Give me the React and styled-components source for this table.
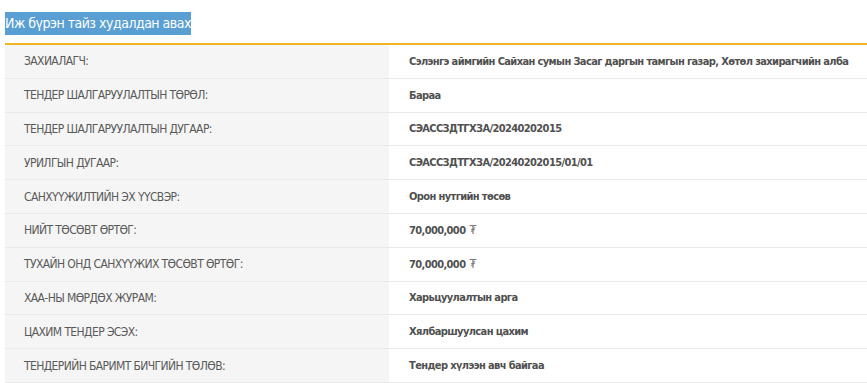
import React from "react";
import styled, { createGlobalStyle } from "styled-components";

const rows = [
  ["ЗАХИАЛАГЧ:", "Сэлэнгэ аймгийн Сайхан сумын Засаг даргын тамгын газар, Хөтөл захирагчийн алба"],
  ["ТЕНДЕР ШАЛГАРУУЛАЛТЫН ТӨРӨЛ:", "Бараа"],
  ["ТЕНДЕР ШАЛГАРУУЛАЛТЫН ДУГААР:", "СЭАССЗДТГХЗА/20240202015"],
  ["УРИЛГЫН ДУГААР:", "СЭАССЗДТГХЗА/20240202015/01/01"],
  ["САНХҮҮЖИЛТИЙН ЭХ ҮҮСВЭР:", "Орон нутгийн төсөв"],
  ["НИЙТ ТӨСӨВТ ӨРТӨГ:", "70,000,000", true],
  ["ТУХАЙН ОНД САНХҮҮЖИХ ТӨСӨВТ ӨРТӨГ:", "70,000,000", true],
  ["ХАА-НЫ МӨРДӨХ ЖУРАМ:", "Харьцуулалтын арга"],
  ["ЦАХИМ ТЕНДЕР ЭСЭХ:", "Хялбаршуулсан цахим"],
  ["ТЕНДЕРИЙН БАРИМТ БИЧГИЙН ТӨЛӨВ:", "Тендер хүлээн авч байгаа"],
];

const GlobalStyle = createGlobalStyle`
  body {
    margin: 0;
    background: #fff;
    font-family: "DejaVu Sans Condensed", "Liberation Sans", sans-serif;
  }
`;

const Page = styled.div`
  padding: 12px 0 0 5px;
`;

const Title = styled.h3`
  margin: 0 0 8px;
  font-size: 14px;
  font-weight: normal;
  line-height: 23px;
  letter-spacing: -0.5px;
`;

const Selected = styled.span`
  display: inline-block;
  background: #5a9fd4;
  color: #fff;
`;

const Table = styled.div`
  border-top: 2px solid #f0b323;
`;

const Row = styled.div`
  display: grid;
  grid-template-columns: 384px 1fr;
  height: 33.8px;
  border-bottom: 1px solid #e9e9e9;
  box-sizing: border-box;
`;

const Label = styled.div`
  display: flex;
  align-items: center;
  background: #f5f5f5;
  padding-left: 19px;
  font-size: 12px;
  letter-spacing: -0.6px;
  color: #5a5a5a;
`;

const Value = styled.div`
  display: flex;
  align-items: center;
  padding-left: 20px;
  font-size: 11px;
  letter-spacing: -0.62px;
  font-weight: bold;
  color: #505050;
  white-space: nowrap;
`;

const Currency = styled.span`
  font-weight: normal;
  font-size: 12px;
  color: #777;
  margin-left: 4px;
`;

export default function App() {
  return (
    <Page>
      <GlobalStyle />
      <Title>
        <Selected>Иж бүрэн тайз худалдан авах</Selected>
      </Title>
      <Table>
        {rows.map(([label, value, money]) => (
          <Row key={label}>
            <Label>{label}</Label>
            <Value>
              {value}
              {money && <Currency>₮</Currency>}
            </Value>
          </Row>
        ))}
      </Table>
    </Page>
  );
}
